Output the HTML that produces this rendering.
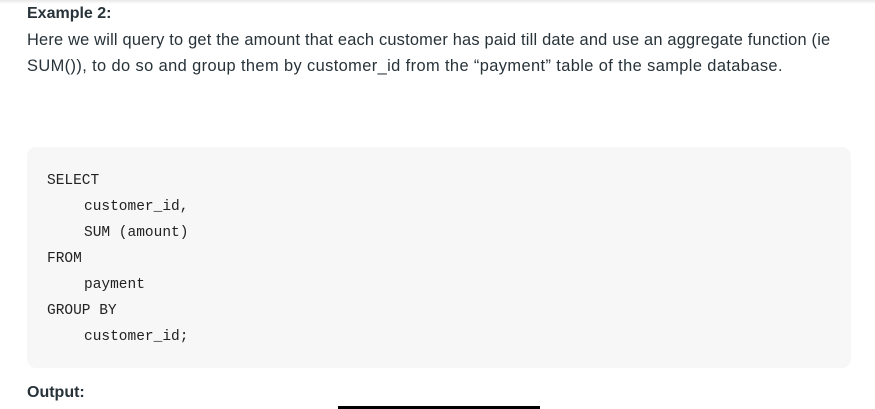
<!DOCTYPE html>
<html><head><style>
body{margin:0;width:875px;height:409px;overflow:hidden;background:#fff;font-family:"Liberation Sans",sans-serif;color:#273239;position:relative}
.top{position:absolute;left:0;top:0;width:875px;height:4px;background:linear-gradient(#e8e8e8,#fff)}
.t{position:absolute;left:27px;font-size:16px;white-space:nowrap}
.code{position:absolute;left:27px;top:147px;width:824px;height:221px;background:#f7f7f7;border-radius:9px}
.l{position:absolute;font-family:"Liberation Mono",monospace;font-size:14.5px;color:#222}
</style></head><body>
<div class="top"></div>
<div class="t" style="top:5px;font-weight:bold;font-size:16px">Example 2:</div>
<div class="t" style="top:31px;font-size:16.4px;letter-spacing:0.2px">Here we will query to get the amount that each customer has paid till date and use an aggregate function (ie</div>
<div class="t" style="top:57px;font-size:16.4px;letter-spacing:0.4px">SUM()), to do so and group them by customer_id from the “payment” table of the sample database.</div>
<div class="code"></div>
<div class="l" style="left:47px;top:173px">SELECT</div>
<div class="l" style="left:84px;top:199px">customer_id,</div>
<div class="l" style="left:84px;top:225px">SUM (amount)</div>
<div class="l" style="left:47px;top:251px">FROM</div>
<div class="l" style="left:84px;top:277px">payment</div>
<div class="l" style="left:47px;top:303px">GROUP BY</div>
<div class="l" style="left:84px;top:329px">customer_id;</div>
<div class="t" style="top:384px;font-weight:bold;font-size:16px">Output:</div>
<div style="position:absolute;left:338px;top:406px;width:202px;height:3px;background:#000"></div>
</body></html>
